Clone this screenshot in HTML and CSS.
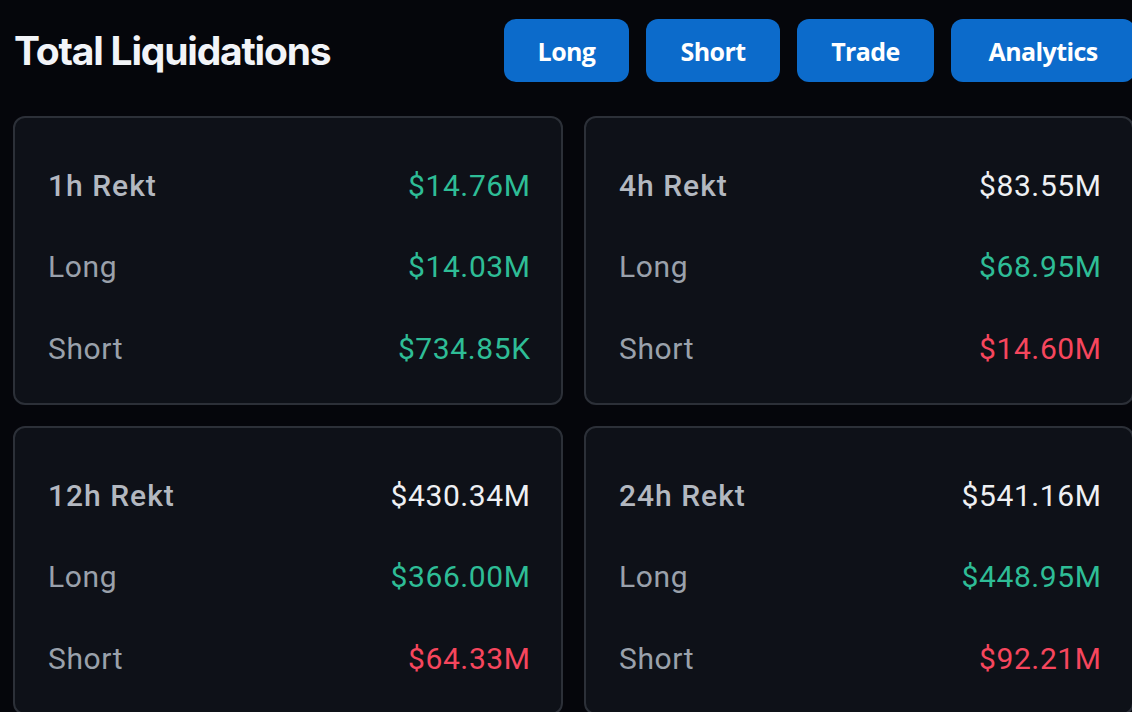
FILE: index.html
```html
<!DOCTYPE html>
<html>
<head>
<meta charset="utf-8">
<link rel="stylesheet" href="styles.css">
</head>
<body>
<div class="page">
  <header class="header">
    <h1 class="title">Total Liquidations</h1>
    <nav class="actions">
      <a class="btn btn-long">Long</a>
      <a class="btn btn-short">Short</a>
      <a class="btn btn-trade">Trade</a>
      <a class="btn btn-analytics">Analytics</a>
    </nav>
  </header>
  <main class="grid">
    <section class="card">
      <div class="row"><span class="label head">1h Rekt</span><span class="value up">$14.76M</span></div>
      <div class="row"><span class="label">Long</span><span class="value up">$14.03M</span></div>
      <div class="row"><span class="label">Short</span><span class="value up">$734.85K</span></div>
    </section>
    <section class="card">
      <div class="row"><span class="label head">4h Rekt</span><span class="value neutral">$83.55M</span></div>
      <div class="row"><span class="label">Long</span><span class="value up">$68.95M</span></div>
      <div class="row"><span class="label">Short</span><span class="value down">$14.60M</span></div>
    </section>
    <section class="card">
      <div class="row"><span class="label head">12h Rekt</span><span class="value neutral">$430.34M</span></div>
      <div class="row"><span class="label">Long</span><span class="value up">$366.00M</span></div>
      <div class="row"><span class="label">Short</span><span class="value down">$64.33M</span></div>
    </section>
    <section class="card">
      <div class="row"><span class="label head">24h Rekt</span><span class="value neutral">$541.16M</span></div>
      <div class="row"><span class="label">Long</span><span class="value up">$448.95M</span></div>
      <div class="row"><span class="label">Short</span><span class="value down">$92.21M</span></div>
    </section>
  </main>
</div>
</body>
</html>
```
FILE: styles.css
```css
html, body {
  margin: 0;
  padding: 0;
  background: #05060b;
  overflow: hidden;
}
.page {
  width: 1122px;
  padding: 19px 0 0 13px;
  font-family: Roboto, "Liberation Sans", sans-serif;
}
.header {
  display: flex;
  justify-content: space-between;
  align-items: center;
  height: 63px;
}
.title {
  margin: 0 0 0 1px;
  font-family: Inter, "Liberation Sans", sans-serif;
  font-weight: 700;
  font-size: 39px;
  letter-spacing: -1.2px;
  color: #f2f4f8;
}
.actions {
  display: flex;
  gap: 17px;
  height: 63px;
}
.btn {
  display: flex;
  align-items: center;
  justify-content: center;
  height: 63px;
  padding: 0 32px;
  border-radius: 12px;
  background: #0c6bcb;
  color: #ffffff;
  font-family: "Open Sans", "Liberation Sans", sans-serif;
  font-weight: 700;
  font-size: 25px;
  letter-spacing: -0.6px;
  box-sizing: border-box;
}
.btn-long { width: 125px; }
.btn-short { width: 134px; }
.btn-trade { width: 137px; }
.btn-analytics { width: 184px; }
.grid {
  display: grid;
  grid-template-columns: 550px 550px;
  column-gap: 21px;
  row-gap: 21px;
  margin-top: 34px;
}
.card {
  height: 289px;
  box-sizing: border-box;
  border: 2px solid #2c3038;
  border-radius: 12px;
  background: #0e1118;
  padding: 27px 31px 14px 33px;
  display: flex;
  flex-direction: column;
}
.row {
  display: flex;
  justify-content: space-between;
  align-items: center;
  height: 82px;
  font-size: 30px;
  letter-spacing: 0.6px;
}
.label {
  color: #9aa1ab;
}
.label.head {
  color: #b3b8c0;
  font-weight: 500;
  letter-spacing: 1px;
}
.value {
  margin-right: -0.6px;
}
.value.up { color: #2ebd96; }
.value.down { color: #f6465d; }
.value.neutral { color: #eef0f3; }
```
